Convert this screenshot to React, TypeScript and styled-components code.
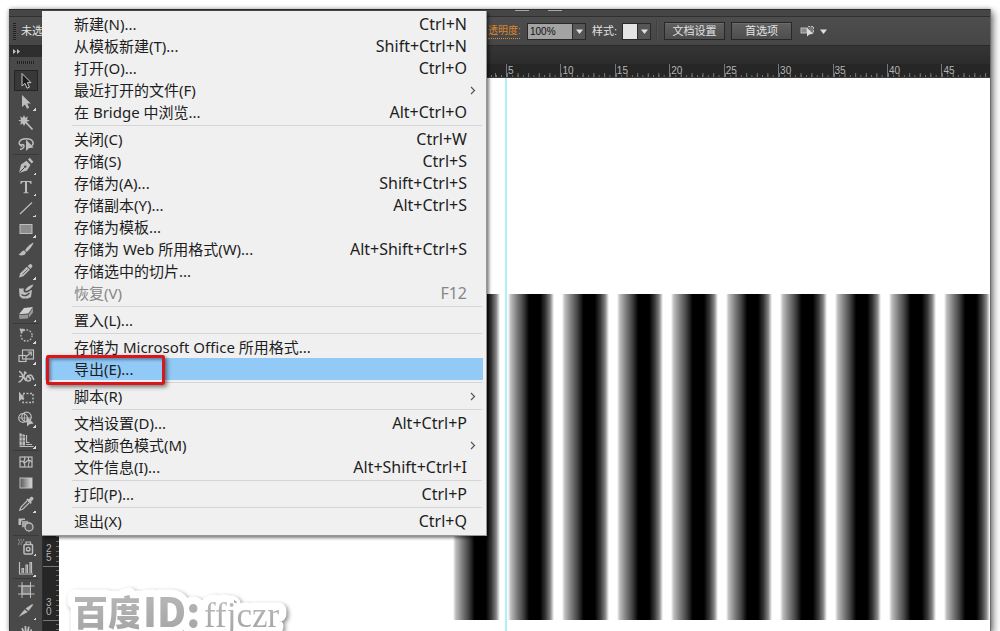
import React from "react";
import styled, { createGlobalStyle, css } from "styled-components";

const uiFont = `"Noto Sans", "Noto Sans CJK SC", sans-serif`;
const panelFont = `"Liberation Sans", "Noto Sans CJK SC", sans-serif`;

const GlobalStyle = createGlobalStyle`
  *, *::before, *::after { box-sizing: border-box; }
  body { margin: 0; background: #fff; font-family: ${uiFont}; overflow: hidden; }
  button, input { font: inherit; color: inherit; margin: 0; }
`;

const Page = styled.main`
  height: 100vh;
  padding: 9px 9px 0 9px;
  overflow: hidden;
`;

const AppWindow = styled.div`
  position: relative;
  display: flex;
  flex-direction: column;
  height: 100%;
  background: #fff;
  border-right: 1px solid #6c6c6c;
  box-shadow: 3px 3px 7px rgba(0, 0, 0, 0.45), 0 0 4px rgba(0, 0, 0, 0.3);
`;

const TitleStrip = styled.header`
  display: flex;
  gap: 19px;
  flex: none;
  height: 8px;
  padding-left: 506px;
  background: #464646;
  border-top: 1px solid #2f2f2f;
  border-bottom: 1px solid #303030;
`;

const TitleMark = styled.span`
  width: 14px;
  height: 1px;
  background: #a9a9a9;
`;

const ControlBar = styled.div`
  display: flex;
  align-items: center;
  flex: none;
  height: 29px;
  background: linear-gradient(#4d4d4d, #464646);
  border-bottom: 1px solid #2a2a2a;
  color: #e2e2e2;
  font-family: ${panelFont};
  font-size: 11px;
  line-height: 16px;
`;

const SelectionInfo = styled.div`
  display: flex;
  align-items: center;
  gap: 5px;
  flex: none;
  width: 479px;
  padding-left: 4px;
`;

const Grip = styled.span<{ $wide?: boolean }>`
  display: block;
  ${(p) =>
    p.$wide
      ? css`
          width: 18px;
          height: 3px;
          background: repeating-linear-gradient(90deg, #1f1f1f 0 1px, #505050 1px 2px);
        `
      : css`
          width: 3px;
          height: 17px;
          background: repeating-linear-gradient(#1f1f1f 0 1px, #505050 1px 2px);
        `}
`;

const OpacityLink = styled.a`
  width: 32px;
  margin-right: 7px;
  color: #dc862c;
  font-size: 10px;
  line-height: 14px;
  text-decoration: none;
  white-space: nowrap;
  border-bottom: 1px dotted #dc862c;
`;

const Field = styled.div`
  display: flex;
  height: 17px;
  border: 1px solid #292929;
`;

const OpacityInput = styled.input`
  width: 44px;
  padding: 0 2px;
  border: 0;
  background: #a3a3a3;
  color: #111;
  font-size: 10px;
  line-height: 15px;
`;

const ArrowButton = styled.button`
  display: flex;
  align-items: center;
  justify-content: center;
  width: 13px;
  padding: 0;
  border: 0;
  border-left: 1px solid #2c2c2c;
  background: #565656;
`;

const StyleLabel = styled.span`
  width: 30px;
  margin-left: 6px;
  white-space: nowrap;
`;

const Swatch = styled.span`
  width: 14px;
  background: #e4e4e4;
`;

const Divider = styled.span`
  width: 2px;
  height: 22px;
  margin: 0 6px 0 5px;
  background: #414141;
  border-right: 1px solid #525252;
`;

const PanelButton = styled.button`
  width: 61px;
  height: 18px;
  margin-right: 6px;
  padding: 0;
  border: 1px solid #272727;
  background: linear-gradient(#606060, #4e4e4e);
  box-shadow: inset 0 1px 0 #6c6c6c;
  color: #e2e2e2;
  line-height: 15px;
`;

const IsolateButton = styled.button`
  display: flex;
  align-items: center;
  gap: 5px;
  padding: 0 2px;
  border: 0;
  background: none;
`;

const Body = styled.div`
  display: flex;
  flex: 1;
  min-height: 0;
`;

const Toolbox = styled.nav`
  display: flex;
  flex-direction: column;
  align-items: stretch;
  flex: none;
  width: 34px;
  background: #494949;
  border-left: 1px solid #383838;
  border-right: 1px solid #2b2b2b;
  overflow: hidden;
`;

const ToolboxHeader = styled.div`
  display: flex;
  flex: none;
  align-items: center;
  height: 11px;
  padding-left: 3px;
  background: #2e2e2e;
`;

const GripRow = styled.div`
  display: flex;
  flex: none;
  height: 13px;
  padding: 4px 0 0 7px;
`;

const ToolButton = styled.button<{ $active?: boolean }>`
  position: relative;
  display: flex;
  flex: none;
  align-items: center;
  justify-content: center;
  height: 21px;
  margin: 0 4px;
  padding: 0;
  border: 1px solid ${(p) => (p.$active ? "#242424" : "transparent")};
  background: ${(p) => (p.$active ? "#383838" : "none")};
`;

const Flyout = styled.i`
  position: absolute;
  right: 1px;
  bottom: 0;
  width: 3px;
  height: 3px;
  background: linear-gradient(135deg, transparent 50%, #d8d8d8 50%);
`;

const ToolRule = styled.hr`
  flex: none;
  width: 26px;
  height: 1px;
  margin: 0 3px;
  border: 0;
  background: #393939;
`;

const Document = styled.section`
  display: flex;
  flex-direction: column;
  flex: 1;
  min-width: 0;
`;

const TabBand = styled.div`
  flex: none;
  height: 18px;
  background: linear-gradient(#353535, #2c2c2c);
`;

const HRuler = styled.div`
  display: flex;
  flex: none;
  height: 14px;
  background: #262626;
  border-bottom: 1px solid #3c3c3c;
`;

const tick = "linear-gradient(90deg, #777 1px, transparent 1px)";

const HRulerLead = styled.div`
  flex: 0 0 463px;
  background: ${tick} right bottom / 11px 4px repeat-x, ${tick} right bottom / 5px 2px repeat-x;
`;

const HRulerCell = styled.div<{ $units: number }>`
  flex: ${(p) => p.$units} 1 0;
  min-width: 0;
  padding-left: 1px;
  border-left: 1px solid #777;
  background: ${tick} left bottom / ${(p) => 100 / p.$units}% 4px repeat-x,
    ${tick} left bottom / ${(p) => 50 / p.$units}% 2px repeat-x;
  color: #b4b4b4;
  font-family: ${panelFont};
  font-size: 10px;
  line-height: 13px;
`;

const Workspace = styled.div`
  display: flex;
  flex: 1;
  min-height: 0;
`;

const vtick = "linear-gradient(#6a6a6a 1px, transparent 1px)";

const VRuler = styled.div`
  flex: none;
  width: 16px;
  padding-top: 3px;
  background: #262626;
  overflow: hidden;
`;

const VRulerCell = styled.div`
  display: flex;
  flex-direction: column;
  justify-content: flex-end;
  height: 54px;
  padding: 0 0 4px 3px;
  border-bottom: 1px solid #777;
  background: ${vtick} right bottom / 3px 5px repeat-y;
  color: #b4b4b4;
  font-family: ${panelFont};
  font-size: 10px;
  line-height: 9px;
`;

const Canvas = styled.div`
  position: relative;
  flex: 1;
  min-width: 0;
  background: #fff;
  overflow: hidden;
`;

const Stripes = styled.div`
  display: flex;
  gap: 8px;
  margin: 216px 0 0 394px;
`;

const Stripe = styled.div`
  flex: 1;
  height: 326px;
  background: linear-gradient(
    90deg,
    #fff 0%,
    #bdbdbd 6%,
    #808080 19%,
    #444 33%,
    #000 46%,
    #000 70%,
    #3a3a3a 82%,
    #858585 92%,
    #fff 100%
  );
`;

const Guide = styled.div`
  position: absolute;
  top: 0;
  bottom: 0;
  left: 446px;
  width: 2px;
  background: #aef3f3;
`;

const Watermark = styled.svg`
  position: absolute;
  left: 0;
  bottom: 0;
  filter: drop-shadow(2px 2px 2px rgba(0, 0, 0, 0.45));
`;

const Menu = styled.div`
  position: absolute;
  top: 2px;
  left: 33px;
  width: 445px;
  padding: 2px 3px 3px 3px;
  background: #f0f0f0;
  border-right: 1px solid #969696;
  border-bottom: 1px solid #969696;
  box-shadow: 2px 2px 3px rgba(0, 0, 0, 0.5);
`;

const MenuItem = styled.button<{ $active?: boolean }>`
  display: flex;
  align-items: center;
  justify-content: space-between;
  width: 100%;
  height: 22px;
  padding: 0 16px 0 29px;
  border: 0;
  background: ${(p) => (p.$active ? "#91c9f7" : "none")};
  color: #1d1d1d;
  font-size: 15px;
  line-height: 22px;
  text-align: left;
  white-space: nowrap;

  &:disabled {
    color: #868686;
  }
`;

const Shortcut = styled.span`
  font-size: 16px;
`;

const Chevron = styled.svg`
  margin-right: -9px;
`;

const MenuRule = styled.hr`
  height: 1px;
  margin: 2px 1px 2px 27px;
  border: 0;
  background: #d5d5d5;
`;

const Callout = styled.div`
  position: absolute;
  top: 346px;
  left: 37px;
  width: 119px;
  height: 30px;
  border: 3px solid #d9171b;
  border-radius: 2px;
  box-shadow: 2px 2px 4px rgba(0, 0, 0, 0.5), inset 2px 2px 3px rgba(0, 0, 0, 0.35);
  pointer-events: none;
`;

type Entry = { label: string; keys?: string; sub?: boolean; off?: boolean; active?: boolean };

const groups: Entry[][] = [
  [
    { label: "新建(N)...", keys: "Ctrl+N" },
    { label: "从模板新建(T)...", keys: "Shift+Ctrl+N" },
    { label: "打开(O)...", keys: "Ctrl+O" },
    { label: "最近打开的文件(F)", sub: true },
    { label: "在 Bridge 中浏览...", keys: "Alt+Ctrl+O" },
  ],
  [
    { label: "关闭(C)", keys: "Ctrl+W" },
    { label: "存储(S)", keys: "Ctrl+S" },
    { label: "存储为(A)...", keys: "Shift+Ctrl+S" },
    { label: "存储副本(Y)...", keys: "Alt+Ctrl+S" },
    { label: "存储为模板..." },
    { label: "存储为 Web 所用格式(W)...", keys: "Alt+Shift+Ctrl+S" },
    { label: "存储选中的切片..." },
    { label: "恢复(V)", keys: "F12", off: true },
  ],
  [{ label: "置入(L)..." }],
  [{ label: "存储为 Microsoft Office 所用格式..." }, { label: "导出(E)...", active: true }],
  [{ label: "脚本(R)", sub: true }],
  [
    { label: "文档设置(D)...", keys: "Alt+Ctrl+P" },
    { label: "文档颜色模式(M)", sub: true },
    { label: "文件信息(I)...", keys: "Alt+Shift+Ctrl+I" },
  ],
  [{ label: "打印(P)...", keys: "Ctrl+P" }],
  [{ label: "退出(X)", keys: "Ctrl+Q" }],
];

const c = "#bdbdbd";
const line = { fill: "none", stroke: c, strokeWidth: 1.2 };

type Tool = { name: string; art: React.ReactNode; fly?: boolean };

const toolGroups: Tool[][] = [
  [
    { name: "选择", art: <path d="M5 1.5V14l3-2.6 2 4.8 2.4-1-2-4.6H14Z" fill="#1c1c1c" stroke="#c8c8c8" strokeWidth="1" /> },
    { name: "直接选择", fly: true, art: <path d="M5 2v12l3-2.6 2 4.4 2.2-1-2-4.3h3.6Z" fill={c} /> },
    {
      name: "魔棒",
      art: (
        <>
          <path d="m7 1 1.2 2.8L11 2.5 9.8 5.4l3 1.2-3 1.2 1.2 3-2.8-1.3L7 12.3 5.8 9.5 3 10.8l1.2-3-3-1.2 3-1.2L3 2.5l2.8 1.3Z" fill={c} />
          <path d="m9.5 9 6 6.5" stroke={c} strokeWidth="1.8" />
        </>
      ),
    },
    {
      name: "套索",
      art: (
        <>
          <path d="M5.500 11.500C0 10 1.500 3.800 9 3.800s8.500 5 5.500 7M3.500 11c0-2 3.500-2 3.500 0s-2 3-4 3.500" fill="none" stroke={c} strokeWidth="1.500" />
          <path d="M9 4.500v11.500l2.800-2.800 4.700-.7Z" fill={c} />
        </>
      ),
    },
  ],
  [
    {
      name: "钢笔",
      fly: true,
      art: (
        <>
          <path d="m2 16 2-8.500 5.500-3.800 4 4.300L10 13.500Z" fill={c} />
          <path d="m11 2.500 1.800-1.700 3.600 4-1.700 1.700Z" fill={c} />
          <path d="m2.500 15.500 5-5" stroke="#444" strokeWidth="1" />
          <circle cx="8.200" cy="9.600" r="1.200" fill="#444" />
        </>
      ),
    },
    { name: "文字", fly: true, art: <path d="M3.500 3h11v3h-1c-.2-1.500-.8-1.900-3.500-1.900v9.200c0 1 .5 1.200 1.500 1.200v.8h-5v-.8c1 0 1.500-.2 1.500-1.200V4.100c-2.700 0-3.300.4-3.500 1.900h-1Z" fill={c} /> },
    { name: "直线段", fly: true, art: <path d="M3 15 15 3.500" {...line} /> },
    { name: "矩形", fly: true, art: <rect x="3" y="4.500" width="12" height="9" fill="#8d8d8d" stroke={c} /> },
    {
      name: "画笔",
      art: (
        <>
          <path d="M16.700 1.500c-3 1-6.800 4.500-8.700 7.800l1.800 1.600c3-2.700 5.700-6 6.900-9.400Z" fill={c} />
          <path d="M7.300 9.600c-2.300-.2-2.800 2.400-5.800 3.900 2.500 1.800 7.300 1 7.400-2.300Z" fill={c} />
        </>
      ),
    },
    {
      name: "铅笔",
      fly: true,
      art: (
        <>
          <path d="m2 15.500 1.300-4.200 6.500-6.500 3 3L6.300 14.200Z" fill={c} />
          <path d="m10.700 4 2-1.800c1.400-.7 3.200 1 2.500 2.600L13.500 7Z" fill={c} />
          <path d="m5.500 12.500 5.200-5.200" stroke="#666" />
        </>
      ),
    },
    {
      name: "斑点画笔",
      art: (
        <>
          <path d="M2 5.500h5C5.800 7.500 6.500 9.500 9 9.500s3.500-2 6-2.500l-1 7-3 1.500H5L2.500 13Z" fill={c} />
          <path d="M16.500 1.500C13 2 9.500 4.500 8 7.300c1.300 1.700 6.800-1.200 8.500-5.800Z" fill={c} />
          <path d="M4.500 11.500c3 2 5.500 1.300 8-1.500" stroke="#4c4c4c" strokeWidth="1.300" fill="none" />
        </>
      ),
    },
    {
      name: "橡皮擦",
      fly: true,
      art: (
        <>
          <path d="m7 4 9-1-4.800 6.500-9.200.8Z" fill="#d2d2d2" />
          <path d="m2 11 9-.6v4L2.500 15ZM11.700 10 16 4v4.500l-4.300 5.500Z" fill="#979797" />
        </>
      ),
    },
  ],
  [
    {
      name: "旋转",
      fly: true,
      art: (
        <>
          <circle cx="9.500" cy="9.500" r="5.600" fill="none" stroke={c} strokeWidth="1.300" strokeDasharray="1.800 1.400" />
          <path d="M2.500 2.500 8 3 4 7.500Z" fill={c} />
        </>
      ),
    },
    {
      name: "比例缩放",
      fly: true,
      art: (
        <>
          <rect x="2" y="8.500" width="7" height="6" {...line} />
          <rect x="5.500" y="3" width="11" height="9" {...line} />
          <path d="m9.500 9.500 4-3.800M10.500 5h3.800v3.800" {...line} />
        </>
      ),
    },
    {
      name: "宽度",
      fly: true,
      art: (
        <>
          <path d="M2 3.500c4 .2 4.500 9.500 9.500 9.500 2.500 0 2.500-2.500 1-3.500s-1.500-2.500 1-2.500c2 0 2 3 3.500 5" fill="none" stroke={c} strokeWidth="1.700" />
          <path d="M1.500 14C4.500 14.500 7 8 8.500 3.500M2 8.500h4l2.500 3.500L11 7M7 4l2.500 1.500" fill="none" stroke={c} strokeWidth="1.600" />
        </>
      ),
    },
    {
      name: "自由变换",
      art: (
        <>
          <path d="M2 2.500v10l2.500-2.200L7.500 9.500Z" fill={c} />
          <rect x="6" y="4.500" width="10" height="9" fill="none" stroke={c} strokeWidth="1.400" strokeDasharray="2 1.500" />
        </>
      ),
    },
    {
      name: "形状生成器",
      fly: true,
      art: (
        <>
          <circle cx="6" cy="8" r="4.300" {...line} />
          <circle cx="9.500" cy="7" r="4.800" {...line} />
          <path d="M2 8h12M7.500 3v9" stroke={c} strokeWidth=".8" />
          <path d="M10 6.500v10l2.500-2.200 4.200-.8Z" fill={c} />
        </>
      ),
    },
    {
      name: "透视网格",
      fly: true,
      art: (
        <>
          <path d="M2.500 2 8 4v10.500H2.500Z" fill={c} />
          <path d="M2.500 6h5.500M2.500 10h5.500M5.200 3v12" stroke="#555" strokeWidth=".8" />
          <path d="M9.500 4v7.500h3M9 13.500h6M2.500 15.500h14" {...line} />
        </>
      ),
    },
  ],
  [
    {
      name: "网格",
      art: (
        <>
          <rect x="3" y="4" width="12" height="10" {...line} />
          <path d="M3 9c3-3 4 2 6 0s3-3 6 0M7 4c3 3-2 4 0 6s1 2 0 4M12 4c-2 3 1 4 0 6s-1 2 0 4" {...line} />
        </>
      ),
    },
    {
      name: "渐变",
      art: (
        <>
          <defs>
            <linearGradient id="toolGradient">
              <stop offset="0" stopColor="#555" />
              <stop offset="1" stopColor="#ddd" />
            </linearGradient>
          </defs>
          <rect x="3" y="4" width="12" height="10" fill="url(#toolGradient)" stroke={c} />
        </>
      ),
    },
    {
      name: "吸管",
      fly: true,
      art: (
        <>
          <path d="m10.500 3.500 1.300.8 1.700-2c1.700-1.400 4 .7 2.600 2.500l-2 1.700.7 1.300-1.300 1.200-4.300-4.300Z" fill={c} />
          <path d="m10 6-6 6.200-1.200 3L6 14l6-6" {...line} />
        </>
      ),
    },
    {
      name: "混合",
      art: (
        <>
          <rect x="1.500" y="2.500" width="6.500" height="6.500" fill={c} />
          <rect x="4.500" y="4.500" width="7" height="7" rx="1" fill="#a5a5a5" stroke="#555" />
          <circle cx="12" cy="11" r="4" fill="#5a5a5a" stroke={c} strokeWidth="1.300" />
        </>
      ),
    },
  ],
  [
    {
      name: "符号喷枪",
      fly: true,
      art: (
        <>
          <rect x="7" y="6.500" width="8.500" height="9.500" rx="1" fill="none" stroke={c} strokeWidth="1.500" />
          <path d="M9 6V4h4.500v2" {...line} />
          <circle cx="11.200" cy="11.200" r="1.800" fill="none" stroke={c} strokeWidth="1.400" />
          <path d="M1 2h1.200M3.500 2h1.200M6 2h1.200M2 4h1.200M4.500 4h1.200M3.500 6h1.200M1 6h1.200" stroke={c} strokeWidth="1.200" />
        </>
      ),
    },
    { name: "柱形图", fly: true, art: <path d="M2.500 3v12H16M5 14V9.500h1.500V14M9 14V6h1.500v8M13 14V3.500h1.500V14" {...line} /> },
  ],
  [
    {
      name: "画板",
      art: (
        <>
          <rect x="5" y="5" width="8.500" height="8" fill="#777" stroke={c} />
          <path d="M5 1v16M13.500 1v16M1 5h16.500M1 13h16.500" stroke={c} strokeWidth="1" />
        </>
      ),
    },
    {
      name: "切片",
      fly: true,
      art: (
        <>
          <path d="m1.500 15 6-7.500 3.300 2.600Z" fill={c} />
          <path d="m8.500 6.500 6-4h2l-5 6.500Z" fill={c} />
        </>
      ),
    },
    { name: "抓手", fly: true, art: <path d="M6 16 2 9.500l1.500-.7L6 11 4.300 5.200l1.500-.5L7.700 9 7.500 3h1.700l.5 6 1.300-5.500 1.600.3-.8 6 2-3.800 1.400.7L13 16Z" fill={c} /> },
  ],
];

const hMarks = [5, 10, 15, 20, 25, 30, 35, 40, 45];
const vMarks = ["", "", "", "", "", "", "", "", "25", "30", ""];

const DownArrow = () => (
  <svg width="7" height="5" viewBox="0 0 7 5" aria-hidden="true">
    <path d="M0 .5h7L3.500 5Z" fill="#e0e0e0" />
  </svg>
);

const FileMenu = () => (
  <Menu role="menu" aria-label="文件">
    {groups.map((group, g) => (
      <React.Fragment key={g}>
        {g > 0 && <MenuRule />}
        {group.map((item) => (
          <MenuItem key={item.label} type="button" role="menuitem" disabled={item.off} $active={item.active}>
            <span>{item.label}</span>
            {item.keys && <Shortcut>{item.keys}</Shortcut>}
            {item.sub && (
              <Chevron width="6" height="9" viewBox="0 0 6 9" aria-hidden="true">
                <path d="m1 1 3.500 3.500L1 8" fill="none" stroke="#555" strokeWidth="1.200" />
              </Chevron>
            )}
          </MenuItem>
        ))}
      </React.Fragment>
    ))}
  </Menu>
);

export default function App() {
  return (
    <Page>
      <GlobalStyle />
      <AppWindow>
        <TitleStrip>
          <TitleMark />
          <TitleMark />
        </TitleStrip>
        <ControlBar>
          <SelectionInfo>
            <Grip />
            <span>未选</span>
          </SelectionInfo>
          <OpacityLink href="#opacity">透明度:</OpacityLink>
          <Field>
            <OpacityInput aria-label="不透明度" defaultValue="100%" />
            <ArrowButton type="button" aria-label="不透明度选项">
              <DownArrow />
            </ArrowButton>
          </Field>
          <StyleLabel>样式:</StyleLabel>
          <Field>
            <Swatch />
            <ArrowButton type="button" aria-label="样式选项">
              <DownArrow />
            </ArrowButton>
          </Field>
          <Divider />
          <PanelButton type="button">文档设置</PanelButton>
          <PanelButton type="button">首选项</PanelButton>
          <IsolateButton type="button" aria-label="选择类似的对象">
            <svg width="15" height="12" viewBox="0 0 15 12" aria-hidden="true">
              <rect x="1" y="3" width="6" height="5" fill="#8a8a8a" stroke="#bbb" />
              <path d="M8 1.500h5.500V8H11" fill="#777" stroke="#bbb" strokeDasharray="2 1" />
              <path d="M7 2.500v9l2.300-2 3.700-.7Z" fill="#ddd" />
            </svg>
            <DownArrow />
          </IsolateButton>
        </ControlBar>
        <Body>
          <Toolbox aria-label="工具">
            <ToolboxHeader>
              <svg width="8" height="5" viewBox="0 0 8 5" aria-hidden="true">
                <path d="M0 0l3 2.500L0 5ZM4 0l3 2.500L4 5Z" fill="#c4c4c4" />
              </svg>
            </ToolboxHeader>
            <GripRow>
              <Grip $wide />
            </GripRow>
            {toolGroups.map((group, g) => (
              <React.Fragment key={g}>
                {g > 0 && <ToolRule />}
                {group.map((tool, i) => (
                  <ToolButton key={tool.name} type="button" aria-label={tool.name} $active={g === 0 && i === 0}>
                    <svg width="18" height="18" viewBox="0 0 18 18" aria-hidden="true">
                      {tool.art}
                    </svg>
                    {tool.fly && <Flyout />}
                  </ToolButton>
                ))}
              </React.Fragment>
            ))}
          </Toolbox>
          <Document>
            <TabBand />
            <HRuler>
              <HRulerLead />
              {hMarks.map((mark) => (
                <HRulerCell key={mark} $units={mark === 45 ? 4.45 : 5}>
                  {mark}
                </HRulerCell>
              ))}
            </HRuler>
            <Workspace>
              <VRuler>
                {vMarks.map((mark, i) => (
                  <VRulerCell key={i}>
                    {mark.split("").map((digit, d) => (
                      <span key={d}>{digit}</span>
                    ))}
                  </VRulerCell>
                ))}
              </VRuler>
              <Canvas>
                <Stripes>
                  {Array.from({ length: 10 }, (_, i) => (
                    <Stripe key={i} />
                  ))}
                </Stripes>
                <Guide />
                <Watermark width="250" height="56" viewBox="0 0 250 56">
                  <defs>
                    <linearGradient id="markFill" x1="0" y1="0" x2="0" y2="1">
                      <stop offset="0" stopColor="#bdbdbd" />
                      <stop offset="1" stopColor="#a2a2a2" />
                    </linearGradient>
                  </defs>
                  <g fill="url(#markFill)" stroke="#fff" strokeWidth="15" strokeLinejoin="round" paintOrder="stroke">
                    <text y="51" fontFamily='"Noto Sans CJK SC", sans-serif' fontWeight="900" fontSize="35">
                      <tspan x="14">百度</tspan>
                      <tspan x="84" y="52" fontSize="40">ID:</tspan>
                    </text>
                    <text x="145" y="52" fontFamily='"Liberation Serif", serif' fontSize="35">ffjczr</text>
                  </g>
                </Watermark>
              </Canvas>
            </Workspace>
          </Document>
        </Body>
        <FileMenu />
        <Callout />
      </AppWindow>
    </Page>
  );
}
